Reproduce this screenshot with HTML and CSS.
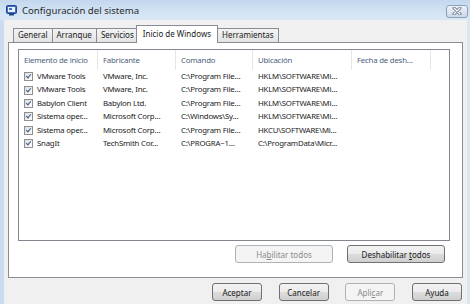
FILE: index.html
```html
<!DOCTYPE html>
<html lang="es">
<head>
<meta charset="utf-8">
<title>Configuración del sistema</title>
<link rel="stylesheet" href="styles.css">
</head>
<body>
<div class="window">
  <div class="titlebar">
    <svg class="app-icon" width="11" height="11" viewBox="0 0 11 11">
      <rect x="0.5" y="0.5" width="10" height="8" rx="1" fill="#3f6fc4" stroke="#24478d"/>
      <rect x="2" y="2" width="7" height="5" fill="#e9f1fb"/>
      <rect x="3" y="3" width="3" height="2" fill="#3f6fc4"/>
      <rect x="3" y="9" width="5" height="1.5" fill="#24478d"/>
    </svg>
    <span class="title">Configuración del sistema</span>
    <div class="close-btn">
      <svg width="12" height="8" viewBox="0 0 12 8">
        <path d="M3 1 L9 7 M9 1 L3 7" stroke="#5c6b80" stroke-width="3" stroke-linecap="round"/>
        <path d="M3 1 L9 7 M9 1 L3 7" stroke="#ffffff" stroke-width="1.4" stroke-linecap="round"/>
      </svg>
    </div>
  </div>
  <div class="client">
    <div class="tabs">
      <div class="tab">General</div>
      <div class="tab">Arranque</div>
      <div class="tab">Servicios</div>
      <div class="tab active">Inicio de Windows</div>
      <div class="tab">Herramientas</div>
    </div>
    <div class="panel">
      <div class="list">
        <div class="row header">
          <div class="cell">Elemento de inicio</div>
          <div class="cell">Fabricante</div>
          <div class="cell">Comando</div>
          <div class="cell">Ubicación</div>
          <div class="cell">Fecha de desh…</div>
          <div class="cell filler"></div>
        </div>
        <div class="row">
          <div class="cell"><span class="check"></span>VMware Tools</div>
          <div class="cell">VMware, Inc.</div>
          <div class="cell">C:\Program File…</div>
          <div class="cell">HKLM\SOFTWARE\Mi…</div>
          <div class="cell"></div>
          <div class="cell"></div>
        </div>
        <div class="row">
          <div class="cell"><span class="check"></span>VMware Tools</div>
          <div class="cell">VMware, Inc.</div>
          <div class="cell">C:\Program File…</div>
          <div class="cell">HKLM\SOFTWARE\Mi…</div>
          <div class="cell"></div>
          <div class="cell"></div>
        </div>
        <div class="row">
          <div class="cell"><span class="check"></span>Babylon Client</div>
          <div class="cell">Babylon Ltd.</div>
          <div class="cell">C:\Program File…</div>
          <div class="cell">HKLM\SOFTWARE\Mi…</div>
          <div class="cell"></div>
          <div class="cell"></div>
        </div>
        <div class="row">
          <div class="cell"><span class="check"></span>Sistema oper…</div>
          <div class="cell">Microsoft Corp…</div>
          <div class="cell">C:\Windows\Sy…</div>
          <div class="cell">HKLM\SOFTWARE\Mi…</div>
          <div class="cell"></div>
          <div class="cell"></div>
        </div>
        <div class="row">
          <div class="cell"><span class="check"></span>Sistema oper…</div>
          <div class="cell">Microsoft Corp…</div>
          <div class="cell">C:\Program File…</div>
          <div class="cell">HKCU\SOFTWARE\Mi…</div>
          <div class="cell"></div>
          <div class="cell"></div>
        </div>
        <div class="row">
          <div class="cell"><span class="check"></span>SnagIt</div>
          <div class="cell">TechSmith Cor…</div>
          <div class="cell">C:\PROGRA~1…</div>
          <div class="cell">C:\ProgramData\Micr…</div>
          <div class="cell"></div>
          <div class="cell"></div>
        </div>
      </div>
      <div class="actions">
        <button class="btn wide" disabled>Ha<u>b</u>ilitar todos</button>
        <button class="btn wide">Deshabilitar <u>t</u>odos</button>
      </div>
    </div>
    <div class="footer">
      <button class="btn">Aceptar</button>
      <button class="btn">Cancelar</button>
      <button class="btn" disabled>Apli<u>c</u>ar</button>
      <button class="btn">Ayuda</button>
    </div>
  </div>
</div>
</body>
</html>
```

FILE: styles.css
```css
* { box-sizing: border-box; }
html, body { margin: 0; padding: 0; }
body {
  width: 470px;
  height: 304px;
  overflow: hidden;
  font-family: "Noto Sans", "Open Sans", sans-serif;
  font-size: 8px;
  color: #1a1a1a;
  background: linear-gradient(to right, #c9dcf0 0, #d9e6f4 100%);
}
.window {
  display: flex;
  flex-direction: column;
  width: 470px;
  height: 304px;
}
.titlebar {
  height: 20px;
  display: flex;
  align-items: center;
  padding-left: 6px;
  background: linear-gradient(#c2d7ee, #d3e3f4 60%, #dae7f5);
}
.app-icon { margin-right: 5px; margin-top: 1px; flex: none; }
.title {
  font-size: 9.6px;
  color: #2b2b2b;
  flex: 1;
}
.close-btn {
  flex: none;
  width: 22px;
  height: 13px;
  margin-right: 2px;
  margin-top: 2px;
  border: 1px solid #8ea0b8;
  border-radius: 3px;
  background: linear-gradient(#eef3fa, #cbd8e8);
  display: flex;
  align-items: center;
  justify-content: center;
}
.client {
  flex: 1;
  margin: 0 3px 0 4px;
  background: #f0f0f0;
  padding: 5px 4px 0 4px;
}
.tabs {
  display: flex;
  align-items: flex-end;
  height: 17px;
  padding-left: 5px;
}
.tab {
  height: 14px;
  line-height: 12px;
  padding: 0 4px;
  border: 1px solid #898c95;
  border-bottom: none;
  margin-right: -1px;
  background: linear-gradient(#f3f3f3, #e3e3e3);
  color: #1a1a1a;
  white-space: nowrap;
}
.tab.active {
  height: 18px;
  line-height: 15px;
  padding: 0 6px;
  margin: 0 -1px -1px -2px;
  background: #ffffff;
  position: relative;
  z-index: 1;
}
.panel {
  height: 236px;
  border: 1px solid #898c95;
  background: #ffffff;
  padding: 6px 12px 0 9px;
}
.list {
  height: 192px;
  border: 1px solid #828790;
  background: #fff;
  font-size: 7.8px;
  letter-spacing: -0.2px;
}
.row {
  display: grid;
  grid-template-columns: 79px 78px 77px 99px 79px 1fr;
  height: 13.4px;
  line-height: 13.4px;
}
.row.header {
  height: 20px;
  line-height: 19px;
  color: #4c607a;
}
.row.header .cell { border-right: 1px solid #e2e5ea; }
.row.header .cell.filler { border-right: none; }
.cell {
  padding-left: 5px;
  white-space: nowrap;
  overflow: hidden;
  display: flex;
  align-items: center;
}
.check {
  width: 9px;
  height: 9px;
  border: 1px solid #8f8f8f;
  background: linear-gradient(135deg, #dcdcdc, #ffffff);
  margin-right: 4px;
  flex: none;
  position: relative;
}
.check::after {
  content: "";
  position: absolute;
  left: 2px;
  top: 0px;
  width: 2px;
  height: 4px;
  border: solid #3c5594;
  border-width: 0 1.5px 1.5px 0;
  transform: rotate(40deg);
}
.actions {
  display: flex;
  justify-content: flex-end;
  gap: 14px;
  margin-top: 4px;
  padding-right: 5px;
}
.btn {
  font: inherit;
  height: 18px;
  width: 50px;
  padding: 0;
  border: 1px solid #707070;
  border-radius: 3px;
  background: linear-gradient(#f3f3f3 0, #ebebeb 50%, #dddddd 51%, #cfcfcf 100%);
  color: #1a1a1a;
}
.btn.wide { width: 98px; }
.btn:disabled {
  border-color: #adb2b5;
  background: #f4f4f4;
  color: #8a8a8a;
}
.footer {
  display: flex;
  justify-content: flex-end;
  gap: 16.7px;
  margin-top: 5px;
  padding-right: 1px;
}
```
